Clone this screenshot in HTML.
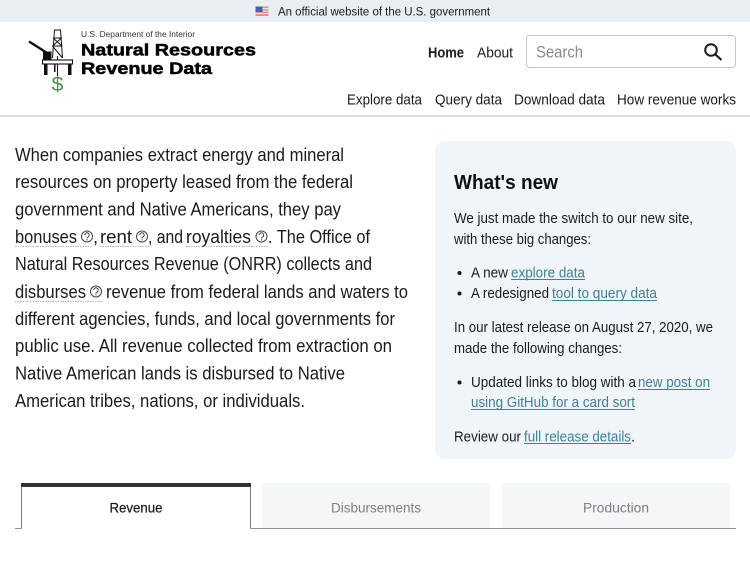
<!DOCTYPE html>
<html lang="en"><head><meta charset="utf-8"><title>Natural Resources Revenue Data</title>
<style>
html,body{margin:0;padding:0;background:#fff;width:750px;height:563px;overflow:hidden}
svg{display:block}
text{font-family:"Liberation Sans",sans-serif;fill:#1b1b1b}
.m{font-size:18.4px}
.s{font-size:14.6px}
.n{font-size:14.6px}
.l{fill:#3f7f98}
</style></head><body>
<svg width="750" height="563" viewBox="0 0 750 563" xmlns="http://www.w3.org/2000/svg">
<defs><g id="q"><circle cx="0" cy="0" r="5.500" fill="none" stroke="#444" stroke-width="1"/><path d="M-2.200-1.500a2.200 2.200 0 1 1 3.600 1.700c-.9.600-1.400 1-1.400 1.800M0 2.800v1.100" fill="none" stroke="#444" stroke-width="1"/></g></defs>
<rect width="750" height="563" fill="#fff"/>
<rect width="750" height="22" fill="#e9eef2"/>
<!-- flag -->
<rect x="255.500" y="6.500" width="13" height="9.500" fill="#e58f92"/>
<path d="M255.500 8.500h13M255.500 11h13M255.500 13.500h13" stroke="#f6e9ea" stroke-width="1"/>
<rect x="255.500" y="6.500" width="7" height="5.500" fill="#4a5fa8"/>
<text x="278" y="15.500" font-size="12.400" textLength="212" lengthAdjust="spacingAndGlyphs">An official website of the U.S. government</text>

<!-- logo -->
<g fill="none" stroke="#111">
<path d="M29 41.500l19 12" stroke-width="2.400"/>
<path d="M54 30h7M54.500 30l-2 28M60.500 30l2 28M53.500 38h8.500M53 46h9.500M53 38l9 8M61.500 38l-9 8M52.500 46l10 12" stroke-width="1"/>
<path d="M57.500 56v26" stroke-width="1"/>
<rect x="42.500" y="60" width="30" height="4" stroke-width="1.100" fill="#fff"/>
</g>
<rect x="43" y="51.500" width="8.500" height="8.500" fill="#111"/>
<rect x="44" y="64" width="3.500" height="11" fill="#111"/>
<rect x="54" y="64" width="1.500" height="8" fill="#111"/>
<rect x="68" y="64" width="3.500" height="11" fill="#111"/>
<text x="51.500" y="91" font-size="20" textLength="12" lengthAdjust="spacingAndGlyphs" style="fill:#4f8f4a">$</text>
<text x="81" y="37" font-size="8.600" textLength="114" lengthAdjust="spacingAndGlyphs" style="fill:#333">U.S. Department of the Interior</text>
<text x="81" y="55.500" font-size="17" font-weight="700" textLength="175" lengthAdjust="spacingAndGlyphs" stroke="#000" stroke-width=".5" style="fill:#000">Natural Resources</text>
<text x="81" y="74" font-size="17" font-weight="700" textLength="131" lengthAdjust="spacingAndGlyphs" stroke="#000" stroke-width=".5" style="fill:#000">Revenue Data</text>

<!-- top nav -->
<text x="428" y="57.500" class="n" font-weight="700" textLength="36" lengthAdjust="spacingAndGlyphs">Home</text>
<text x="477" y="57.500" class="n" textLength="36" lengthAdjust="spacingAndGlyphs">About</text>
<rect x="526.500" y="35.500" width="209" height="32" rx="3" fill="#fff" stroke="#c4c8cc"/>
<text x="536" y="57.500" font-size="16.500" textLength="47" lengthAdjust="spacingAndGlyphs" style="fill:#8a8a8a">Search</text>
<circle cx="711" cy="50" r="5.800" fill="none" stroke="#1b1b1b" stroke-width="2"/>
<path d="M715.500 54.500l6 5.500" stroke="#1b1b1b" stroke-width="2.200"/>

<text x="347" y="104.500" class="n" textLength="75" lengthAdjust="spacingAndGlyphs">Explore data</text>
<text x="435" y="104.500" class="n" textLength="67" lengthAdjust="spacingAndGlyphs">Query data</text>
<text x="514" y="104.500" class="n" textLength="91" lengthAdjust="spacingAndGlyphs">Download data</text>
<text x="617" y="104.500" class="n" textLength="119" lengthAdjust="spacingAndGlyphs">How revenue works</text>
<rect x="0" y="115" width="750" height="2" fill="#dfdfd8"/>

<!-- main paragraph -->
<text x="15" y="161" class="m" textLength="329" lengthAdjust="spacingAndGlyphs">When companies extract energy and mineral</text>
<text x="15" y="188" class="m" textLength="338" lengthAdjust="spacingAndGlyphs">resources on property leased from the federal</text>
<text x="15" y="215.500" class="m" textLength="326" lengthAdjust="spacingAndGlyphs">government and Native Americans, they pay</text>
<text x="15" y="243" class="m" textLength="62" lengthAdjust="spacingAndGlyphs">bonuses</text>
<use href="#q" x="87" y="236.500"/>
<text x="93" y="243" class="m">,</text>
<text x="100" y="243" class="m" textLength="32" lengthAdjust="spacingAndGlyphs">rent</text>
<use href="#q" x="142" y="236.500"/>
<text x="148" y="243" class="m" textLength="35" lengthAdjust="spacingAndGlyphs">, and</text>
<text x="186" y="243" class="m" textLength="65" lengthAdjust="spacingAndGlyphs">royalties</text>
<use href="#q" x="261.500" y="236.500"/>
<text x="268" y="243" class="m" textLength="102" lengthAdjust="spacingAndGlyphs">. The Office of</text>
<text x="15" y="270" class="m" textLength="357" lengthAdjust="spacingAndGlyphs">Natural Resources Revenue (ONRR) collects and</text>
<text x="15" y="298" class="m" textLength="71" lengthAdjust="spacingAndGlyphs">disburses</text>
<use href="#q" x="96" y="291.500"/>
<text x="106" y="298" class="m" textLength="302" lengthAdjust="spacingAndGlyphs">revenue from federal lands and waters to</text>
<text x="15" y="325" class="m" textLength="380" lengthAdjust="spacingAndGlyphs">different agencies, funds, and local governments for</text>
<text x="15" y="352" class="m" textLength="377" lengthAdjust="spacingAndGlyphs">public use. All revenue collected from extraction on</text>
<text x="15" y="379.500" class="m" textLength="330" lengthAdjust="spacingAndGlyphs">Native American lands is disbursed to Native</text>
<text x="15" y="407" class="m" textLength="290" lengthAdjust="spacingAndGlyphs">American tribes, nations, or individuals.</text>
<g stroke="#b5b5b5" stroke-width="1" stroke-dasharray="1.500 1" fill="none">
<path d="M15 246.500h78M100 246.500h49M186 246.500h82M15 301.500h88"/>
</g>

<!-- panel -->
<rect x="435" y="141" width="301" height="318" rx="10" fill="#f0f5fa"/>
<text x="454" y="189" font-size="20" font-weight="700" textLength="104" lengthAdjust="spacingAndGlyphs" style="fill:#111">What's new</text>
<text x="454" y="223" class="s" textLength="239" lengthAdjust="spacingAndGlyphs">We just made the switch to our new site,</text>
<text x="454" y="244" class="s" textLength="137" lengthAdjust="spacingAndGlyphs">with these big changes:</text>
<circle cx="459.500" cy="273" r="2" fill="#1b1b1b"/>
<text x="471" y="277.500" class="s" textLength="37" lengthAdjust="spacingAndGlyphs">A new</text>
<text x="511" y="277.500" class="s l" textLength="74" lengthAdjust="spacingAndGlyphs">explore data</text>
<circle cx="459.500" cy="293.500" r="2" fill="#1b1b1b"/>
<text x="471" y="298" class="s" textLength="78" lengthAdjust="spacingAndGlyphs">A redesigned</text>
<text x="552" y="298" class="s l" textLength="105" lengthAdjust="spacingAndGlyphs">tool to query data</text>
<text x="454" y="332" class="s" textLength="259" lengthAdjust="spacingAndGlyphs">In our latest release on August 27, 2020, we</text>
<text x="454" y="353" class="s" textLength="168" lengthAdjust="spacingAndGlyphs">made the following changes:</text>
<circle cx="459.500" cy="382.500" r="2" fill="#1b1b1b"/>
<text x="471" y="387" class="s" textLength="165" lengthAdjust="spacingAndGlyphs">Updated links to blog with a</text>
<text x="638" y="387" class="s l" textLength="72" lengthAdjust="spacingAndGlyphs">new post on</text>
<text x="471" y="407" class="s l" textLength="164" lengthAdjust="spacingAndGlyphs">using GitHub for a card sort</text>
<text x="454" y="441.500" class="s" textLength="67" lengthAdjust="spacingAndGlyphs">Review our</text>
<text x="524" y="441.500" class="s l" textLength="107" lengthAdjust="spacingAndGlyphs">full release details</text>
<text x="631" y="441.500" class="s">.</text>
<g stroke="#3f7f98" stroke-width="1" fill="none">
<path d="M511 279.500h74M552 300.500h105M638 389.500h72M471 409.500h164M524 443.500h107"/>
</g>

<!-- tabs -->
<rect x="262" y="483" width="228" height="45" fill="#f4f7fa"/>
<rect x="502" y="483" width="228" height="45" fill="#f4f7fa"/>
<path d="M15 528.500h6.500M250.500 528.500H736" stroke="#8f8f8f" stroke-width="1" fill="none"/>
<path d="M21.500 528.500V486M250.500 528.500V486" stroke="#7a7a7a" stroke-width="1" fill="none"/>
<rect x="21" y="483" width="230" height="4" fill="#333"/>
<text x="109.500" y="512.500" font-size="14" textLength="53" lengthAdjust="spacingAndGlyphs" stroke="#1b1b1b" stroke-width=".25">Revenue</text>
<text x="331" y="512.500" font-size="14" textLength="90" lengthAdjust="spacingAndGlyphs" style="fill:#7c7f82">Disbursements</text>
<text x="583" y="512.500" font-size="14" textLength="66" lengthAdjust="spacingAndGlyphs" style="fill:#7c7f82">Production</text>
</svg>
</body></html>
